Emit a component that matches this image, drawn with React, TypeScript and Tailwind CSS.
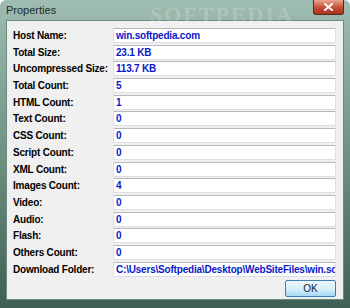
import React from "react";

const rows = [
  { label: "Host Name:", value: "win.softpedia.com" },
  { label: "Total Size:", value: "23.1 KB" },
  { label: "Uncompressed Size:", value: "113.7 KB" },
  { label: "Total Count:", value: "5" },
  { label: "HTML Count:", value: "1" },
  { label: "Text Count:", value: "0" },
  { label: "CSS Count:", value: "0" },
  { label: "Script Count:", value: "0" },
  { label: "XML Count:", value: "0" },
  { label: "Images Count:", value: "4" },
  { label: "Video:", value: "0" },
  { label: "Audio:", value: "0" },
  { label: "Flash:", value: "0" },
  { label: "Others Count:", value: "0" },
  { label: "Download Folder:", value: "C:\\Users\\Softpedia\\Desktop\\WebSiteFiles\\win.softpedia.com" },
];

export default function App() {
  return (
    <div
      className="flex h-[308px] w-[350px] flex-col overflow-hidden rounded-t-[6px] bg-gradient-to-b from-[#9fbcb0] via-[#6f9283] to-[#3f5f53] text-[11px]"
      style={{ fontFamily: '"Liberation Sans", Arial, sans-serif' }}
    >
      {/* title bar */}
      <div className="relative flex h-[20px] shrink-0 items-center pl-[6px]">
        <span className="text-[11px] text-[#1e2b26]">Properties</span>
        <span
          className="absolute left-[150px] top-[-2px] text-[22px] font-bold tracking-[2px] text-white/20"
          style={{ fontFamily: '"Liberation Serif", serif' }}
        >
          SOFTPEDIA
        </span>
        <div className="absolute right-[6px] top-0 flex h-[15px] w-[31px] items-center justify-center rounded-b-[3px] border border-t-0 border-[#5a2a20] bg-gradient-to-b from-[#e8a593] via-[#c8513a] to-[#a8301c]">
          <svg width="9" height="8" viewBox="0 0 9 8">
            <path d="M1 1 L8 7 M8 1 L1 7" stroke="#ffffff" strokeWidth="2" strokeLinecap="square" />
          </svg>
        </div>
      </div>

      {/* client area */}
      <div className="mx-[6px] mb-[8px] flex flex-1 flex-col border border-[#6f8a80] bg-[#f0f0f0] pb-[1px] pl-[6px] pr-[7px] pt-[7px]">
        <div className="flex flex-col gap-[1.7px] text-[10px] tracking-[-0.2px]">
          {rows.map((r) => (
            <div key={r.label} className="flex h-[15px] items-center">
              <div className="w-[100px] shrink-0 whitespace-nowrap font-bold text-black">{r.label}</div>
              <div className="flex h-[15px] min-w-0 flex-1 items-center overflow-hidden whitespace-nowrap rounded-[1px] border border-[#dcdfe3] border-t-[#b6b8bc] bg-white pl-[2px] font-bold text-[#0a19c8]">
                {r.value}
              </div>
            </div>
          ))}
        </div>
        <div className="mt-auto flex justify-end pb-[1px]">
          <button className="flex h-[17px] w-[51px] items-center justify-center rounded-[2px] border border-[#3c7fb1] bg-gradient-to-b from-[#eaf6fd] via-[#d9f0fc] to-[#a7d9f5] text-[10px] text-[#1a1a1a]">
            OK
          </button>
        </div>
      </div>
    </div>
  );
}
